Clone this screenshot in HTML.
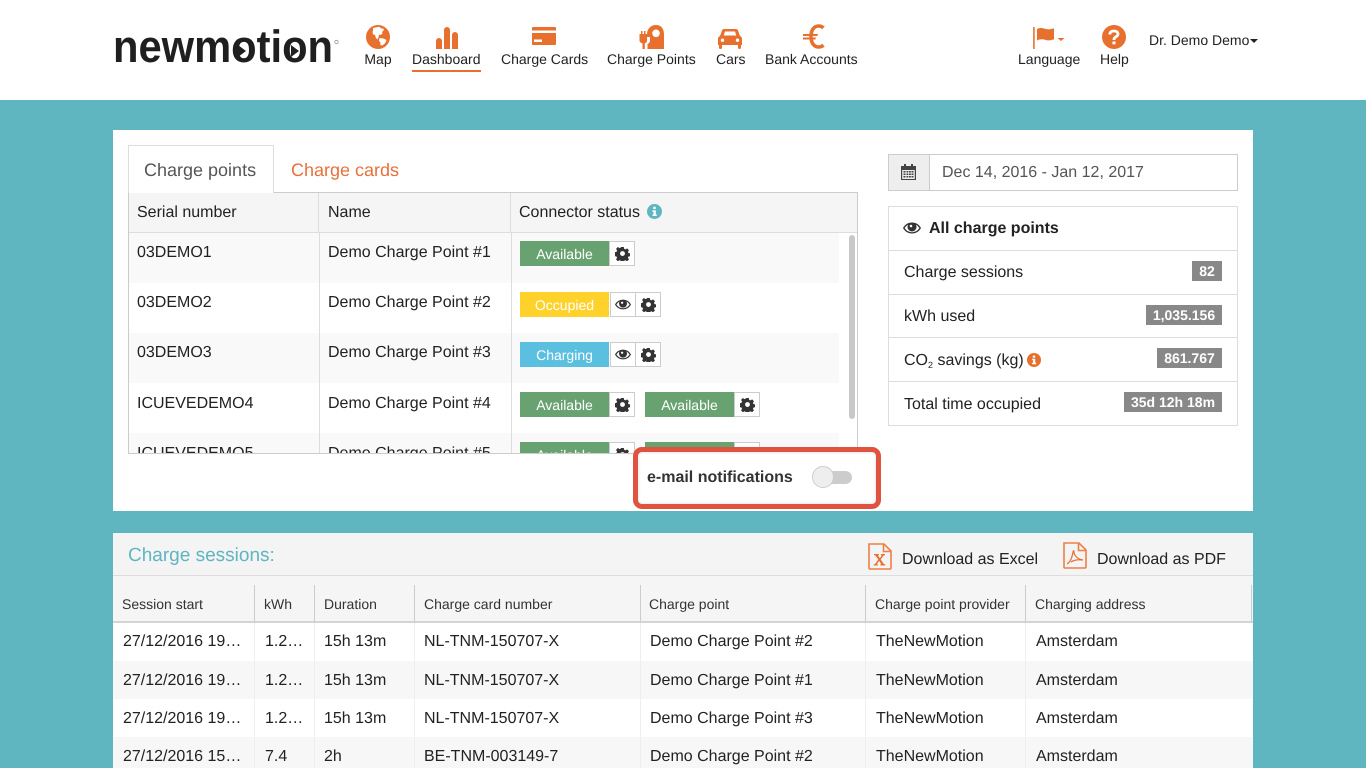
<!DOCTYPE html>
<html lang="en">
<head>
<meta charset="utf-8">
<title>NewMotion Dashboard</title>
<style>
html,body{margin:0;padding:0;width:1366px;height:768px;overflow:hidden;background:#5fb5c0;font-family:"Liberation Sans",Arial,sans-serif;color:#222;text-rendering:geometricPrecision}
*{box-sizing:border-box}
.a{position:absolute}
.t{position:absolute;white-space:nowrap;line-height:20px;height:20px}
.c{transform:translateX(-50%)}
.n{font-size:14px}
.m{font-size:16px;margin-top:1px}
.h{font-size:14px;color:#333}
.badge{position:absolute;height:25px;width:89px;color:#fff;font-size:14px;text-align:center;line-height:26px}
.g{background:#68a270}
.y{background:#ffd22b}
.b{background:#5bc0e0}
.btn{position:absolute;height:25px;width:26px;background:#fff;border:1px solid #ccc}
.btn svg{position:absolute;left:5px;top:4px}
.btn svg.e{left:4px;top:6px}
.gr{position:absolute;background:#888;color:#fff;font-size:14px;font-weight:bold;height:20px;line-height:20px;text-align:center}
</style>
</head>
<body>
<svg width="0" height="0" style="position:absolute">
<defs>
<symbol id="gear" viewBox="0 0 16 16">
<path fill="#333" fill-rule="evenodd" d="M6.600 1h2.800l.4 2 1.400.6 1.700-1.100 2 2-1.100 1.700.6 1.400 2 .4v2.800l-2 .4-.6 1.400 1.100 1.700-2 2-1.700-1.100-1.400.6-.4 2H6.600l-.4-2-1.400-.6-1.700 1.100-2-2 1.100-1.700-.6-1.400-2-.4V6.600l2-.4.6-1.400-1.100-1.700 2-2 1.700 1.100 1.400-.6zM8 5.400a2.600 2.600 0 1 0 0 5.200 2.600 2.600 0 0 0 0-5.200z"/>
</symbol>
<symbol id="eye" viewBox="0 0 18 12">
<path fill="#333" fill-rule="evenodd" d="M0 6C2 2.400 5.200.5 9 .5S16 2.400 18 6c-2 3.600-5.200 5.500-9 5.500S2 9.600 0 6zm1.600 0C3.300 8.600 5.800 10.200 9 10.200S14.700 8.600 16.400 6C15.400 4.500 14.200 3.300 12.700 2.600c.5.700.8 1.500.8 2.400a4.500 4.500 0 0 1-9 0c0-.9.300-1.700.8-2.400C3.800 3.300 2.600 4.500 1.600 6z"/>
<circle cx="8" cy="4" r="1.300" fill="#fff"/>
</symbol>
</defs>
</svg>

<!-- Header -->
<div class="a" style="left:0;top:0;width:1366px;height:100px;background:#fff"></div>

<svg class="a" style="left:110px;top:20px" width="235" height="50" viewBox="0 0 235 50">
<text transform="translate(3 42) scale(1 1.090)" x="0" y="0" font-family="Liberation Sans" font-weight="bold" font-size="41.700" fill="#1f1f1f" textLength="220" lengthAdjust="spacingAndGlyphs">newmotion</text>
<path d="M128 25l8 6-8 6z" fill="#1f1f1f"/>
<path d="M181 25l8 6-8 6z" fill="#1f1f1f"/>
<circle cx="226.500" cy="22" r="1.700" fill="none" stroke="#999" stroke-width=".8"/>
</svg>

<!-- Map icon -->
<svg class="a" style="left:366px;top:25px" width="24" height="24" viewBox="0 0 24 24">
<circle cx="12" cy="12" r="12" fill="#e8702e"/>
<path fill="#fff" d="M7 3l6-1.300 2.500 1.800 2.500.4-.8 2.100-1.200 1 .5 1.500-1.500 1.200-2 0-.5 2.500-1 2.300-1.800-1.800-.5-2.500-2.200-1-.5-2.400L7 6z"/>
<path fill="#fff" d="M13.500 13l4 .5 3 1.500-1.200 3-3 2.500-2-.5.200-2.300-1.500-2z"/>
</svg>
<div class="t n c" style="left:378px;top:49px">Map</div>

<!-- Dashboard icon -->
<svg class="a" style="left:436px;top:27px" width="22" height="22" viewBox="0 0 22 22">
<path fill="#e8702e" d="M0 14a3 3 0 0 1 6 0v8H0zM8 3a3 3 0 0 1 6 0v19H8zM16 8a3 3 0 0 1 6 0v14h-6z"/>
</svg>
<div class="t n" style="left:412px;top:49px">Dashboard</div>
<div class="a" style="left:412px;top:70px;width:69px;height:2px;background:#e8702e"></div>

<!-- Charge cards -->
<svg class="a" style="left:532px;top:27px" width="24" height="18" viewBox="0 0 24 18">
<path fill="#e8702e" d="M1 0h22a1 1 0 0 1 1 1v2.500H0V1a1 1 0 0 1 1-1zM0 6h24v11a1 1 0 0 1-1 1H1a1 1 0 0 1-1-1zM2 12.500v2.500h8v-2.500z"/>
</svg>
<div class="t n" style="left:501px;top:49px">Charge Cards</div>

<!-- Charge points -->
<svg class="a" style="left:639px;top:25px" width="25" height="24" viewBox="0 0 25 24">
<path fill="#e8702e" fill-rule="evenodd" d="M8 9.500C8 4 11.500 0 17 0s8 4 8 9.500V24H8.500v-5c1.500-.5 2.500-2 2.500-3.500v-3.500H8zM17 4.500a3.800 3.800 0 1 0 0 7.600 3.800 3.800 0 0 0 0-7.600z"/>
<path fill="#e8702e" d="M2 6h1.500v3H5V6h1.500v3H8v6.500c0 1.500-1 2.500-2.200 2.800V24H3.500v-5.700C2 18 .5 17 .5 15.500V9H2z"/>
</svg>
<div class="t n" style="left:607px;top:49px">Charge Points</div>

<!-- Cars -->
<svg class="a" style="left:718px;top:29px" width="24" height="20" viewBox="0 0 24 20">
<path fill="#e8702e" fill-rule="evenodd" d="M6 0h12c1 0 1.600.5 2 1.500L22 7c1.300.6 2 1.500 2 3v6h-1v2.500a1.500 1.500 0 0 1-3 0V16H4v2.500a1.500 1.500 0 0 1-3 0V16H0v-6c0-1.500.7-2.400 2-3L4 1.500C4.400.5 5 0 6 0zM7 2.500L5.700 6.500h12.600L17 2.500zM4.500 9.500a1.700 1.700 0 1 0 0 3.400 1.700 1.700 0 0 0 0-3.400zM19.500 9.500a1.700 1.700 0 1 0 0 3.400 1.700 1.700 0 0 0 0-3.400z"/>
</svg>
<div class="t n" style="left:716px;top:49px">Cars</div>

<!-- Euro -->
<svg class="a" style="left:802px;top:24px" width="24" height="25" viewBox="0 0 24 25">
<path fill="none" stroke="#e8702e" stroke-width="3.600" d="M21.500 3.800C20 2.600 18.500 2 16.800 2c-4.800 0-7.800 4-7.800 10.500S12 23 16.800 23c1.700 0 3.200-.6 4.700-1.800"/>
<path fill="#e8702e" d="M1 10h15l-.6 2H1zM1 13.500h13l-.6 2H1z"/>
</svg>
<div class="t n" style="left:765px;top:49px">Bank Accounts</div>

<!-- Language -->
<svg class="a" style="left:1033px;top:26px" width="33" height="24" viewBox="0 0 33 24">
<path fill="#ee7f45" d="M0 1h1.800v22H0z"/>
<path fill="#e8702e" d="M4 3c3-1.500 5.500-1 8-.2s5 .8 9-.5v11c-4 1.500-6.500 1.300-9 .5S7 13 4 14.500z"/>
<path fill="#e8702e" d="M24.500 12h7l-3.500 3z"/>
</svg>
<div class="t n" style="left:1018px;top:49px">Language</div>

<!-- Help -->
<svg class="a" style="left:1102px;top:25px" width="24" height="24" viewBox="0 0 24 24">
<circle cx="12" cy="12" r="12" fill="#e8702e"/>
<path fill="none" stroke="#fff" stroke-width="2.800" d="M7.800 9.500c0-2.300 1.800-3.500 4.200-3.500s4 1.200 4 3.100c0 2.700-4 2.700-4 5.100v.8"/>
<rect x="10.500" y="16.500" width="3" height="2.800" fill="#fff"/>
</svg>
<div class="t n" style="left:1100px;top:49px">Help</div>

<div class="t n" style="left:1149px;top:30px">Dr. Demo Demo</div>
<div class="a" style="left:1250px;top:39px;width:0;height:0;border-left:4px solid transparent;border-right:4px solid transparent;border-top:4px solid #222"></div>

<!-- Panel 1 -->
<div class="a" style="left:113px;top:130px;width:1140px;height:381px;background:#fff"></div>

<!-- Tabs -->
<div class="a" style="left:128px;top:145px;width:146px;height:48px;background:#fff;border:1px solid #ddd;border-bottom:none;z-index:2"></div>
<div class="t" style="left:144px;top:160px;font-size:18px;color:#555;z-index:3">Charge points</div>
<div class="t" style="left:291px;top:160px;font-size:18px;color:#e8703a">Charge cards</div>

<!-- CP table -->
<div class="a" style="left:128px;top:192px;width:730px;height:262px;border:1px solid #ccc;background:#fff"></div>
<div class="a" style="left:129px;top:193px;width:728px;height:40px;background:#f5f5f5;border-bottom:1px solid #ddd"></div>
<div class="a" style="left:318px;top:193px;width:1px;height:40px;background:#ddd"></div>
<div class="a" style="left:510px;top:193px;width:1px;height:40px;background:#ddd"></div>
<div class="t m" style="left:137px;top:202px">Serial number</div>
<div class="t m" style="left:328px;top:202px">Name</div>
<div class="t m" style="left:519px;top:202px">Connector status</div>
<svg class="a" style="left:647px;top:204px" width="15" height="15" viewBox="0 0 15 15"><circle cx="7.500" cy="7.500" r="7.500" fill="#5fb5c0"/><path fill="#fff" d="M6.200 2.800h2.600v2.200H6.200zM5.500 6.200h3.300v4.300h1v1.500H5.500v-1.500h1V7.700h-1z"/></svg>

<div class="a" style="left:129px;top:233px;width:728px;height:220px;overflow:hidden">
  <div class="a" style="left:0;top:0;width:710px;height:50px;background:#f9f9f9"></div>
  <div class="a" style="left:0;top:100px;width:710px;height:50px;background:#f9f9f9"></div>
  <div class="a" style="left:0;top:200px;width:710px;height:50px;background:#f9f9f9"></div>
  <div class="a" style="left:190px;top:0;width:1px;height:220px;background:#ddd"></div>
  <div class="a" style="left:382px;top:0;width:1px;height:220px;background:#ddd"></div>

  <div class="t m" style="left:8px;top:9px">03DEMO1</div>
  <div class="t m" style="left:199px;top:9px">Demo Charge Point #1</div>
  <div class="badge g" style="left:391px;top:8px">Available</div>
  <div class="btn" style="left:480px;top:8px"><svg width="15" height="15"><use href="#gear"/></svg></div>

  <div class="t m" style="left:8px;top:59px">03DEMO2</div>
  <div class="t m" style="left:199px;top:59px">Demo Charge Point #2</div>
  <div class="badge y" style="left:391px;top:59px">Occupied</div>
  <div class="btn" style="left:481px;top:59px"><svg class="e" width="16" height="11"><use href="#eye"/></svg></div>
  <div class="btn" style="left:506px;top:59px"><svg width="15" height="15"><use href="#gear"/></svg></div>

  <div class="t m" style="left:8px;top:109px">03DEMO3</div>
  <div class="t m" style="left:199px;top:109px">Demo Charge Point #3</div>
  <div class="badge b" style="left:391px;top:109px">Charging</div>
  <div class="btn" style="left:481px;top:109px"><svg class="e" width="16" height="11"><use href="#eye"/></svg></div>
  <div class="btn" style="left:506px;top:109px"><svg width="15" height="15"><use href="#gear"/></svg></div>

  <div class="t m" style="left:8px;top:160px">ICUEVEDEMO4</div>
  <div class="t m" style="left:199px;top:160px">Demo Charge Point #4</div>
  <div class="badge g" style="left:391px;top:159px">Available</div>
  <div class="btn" style="left:480px;top:159px"><svg width="15" height="15"><use href="#gear"/></svg></div>
  <div class="badge g" style="left:516px;top:159px">Available</div>
  <div class="btn" style="left:605px;top:159px"><svg width="15" height="15"><use href="#gear"/></svg></div>

  <div class="t m" style="left:8px;top:210px">ICUEVEDEMO5</div>
  <div class="t m" style="left:199px;top:210px">Demo Charge Point #5</div>
  <div class="badge g" style="left:391px;top:209px">Available</div>
  <div class="btn" style="left:480px;top:209px"><svg width="15" height="15"><use href="#gear"/></svg></div>
  <div class="badge g" style="left:516px;top:209px">Available</div>
  <div class="btn" style="left:605px;top:209px"><svg width="15" height="15"><use href="#gear"/></svg></div>

  <div class="a" style="left:720px;top:2px;width:6px;height:184px;border-radius:3px;background:#c8c8c8"></div>
</div>

<!-- Notification highlight -->
<div class="a" style="left:633px;top:447px;width:248px;height:62px;background:#fff;border:5px solid #e0533f;border-radius:9px;box-shadow:inset 0 0 3px rgba(0,0,0,.15)"></div>
<div class="t" style="left:647px;top:468px;font-size:16px;font-weight:bold;color:#333">e-mail notifications</div>
<div class="a" style="left:816px;top:471px;width:36px;height:13px;border-radius:7px;background:#ccc"></div>
<div class="a" style="left:812px;top:466px;width:22px;height:22px;border-radius:50%;background:#eee;border:1px solid #ccc"></div>

<!-- Date -->
<div class="a" style="left:888px;top:154px;width:350px;height:37px;border:1px solid #ccc;background:#fff"></div>
<div class="a" style="left:889px;top:155px;width:41px;height:35px;background:#eee;border-right:1px solid #ccc"></div>
<svg class="a" style="left:901px;top:164px" width="15" height="16" viewBox="0 0 15 16">
<path fill="#444" fill-rule="evenodd" d="M3 0h2v2h5V0h2v2h3v14H0V2h3zM1.200 6v9h12.600V6zM2.500 7h2v1.500h-2zM5.500 7h1.800v1.500H5.500zM8 7h1.800v1.500H8zM10.500 7h2v1.500h-2zM2.500 9.500h2V11h-2zM5.500 9.500h1.800V11H5.500zM8 9.500h1.800V11H8zM10.500 9.500h2V11h-2zM2.500 12h2v1.500h-2zM5.500 12h1.800v1.500H5.500zM8 12h1.800v1.500H8zM10.500 12h2v1.500h-2z"/>
</svg>
<div class="t m" style="left:942px;top:162px;color:#555">Dec 14, 2016 - Jan 12, 2017</div>

<!-- Stats list -->
<div class="a" style="left:888px;top:206px;width:350px;height:220px;border:1px solid #ddd;background:#fff"></div>
<div class="a" style="left:889px;top:250px;width:348px;height:1px;background:#ddd"></div>
<div class="a" style="left:889px;top:294px;width:348px;height:1px;background:#ddd"></div>
<div class="a" style="left:889px;top:337px;width:348px;height:1px;background:#ddd"></div>
<div class="a" style="left:889px;top:381px;width:348px;height:1px;background:#ddd"></div>
<svg class="a" style="left:903px;top:222px" width="18" height="12"><use href="#eye"/></svg>
<div class="t m" style="left:929px;top:218px;font-weight:bold">All charge points</div>
<div class="t m" style="left:904px;top:262px">Charge sessions</div>
<div class="gr" style="left:1192px;top:261px;width:30px">82</div>
<div class="t m" style="left:904px;top:306px">kWh used</div>
<div class="gr" style="left:1146px;top:305px;width:76px">1,035.156</div>
<div class="t m" style="left:904px;top:350px">CO<span style="font-size:9px;position:relative;top:3px">2</span> savings (kg)</div>
<svg class="a" style="left:1027px;top:353px" width="14" height="14" viewBox="0 0 15 15"><circle cx="7.500" cy="7.500" r="7.500" fill="#e8702e"/><path fill="#fff" d="M6.200 2.800h2.600v2.200H6.200zM5.500 6.200h3.300v4.300h1v1.500H5.500v-1.500h1V7.700h-1z"/></svg>
<div class="gr" style="left:1157px;top:348px;width:65px">861.767</div>
<div class="t m" style="left:904px;top:394px">Total time occupied</div>
<div class="gr" style="left:1124px;top:392px;width:98px">35d 12h 18m</div>

<!-- Panel 2 -->
<div class="a" style="left:113px;top:533px;width:1140px;height:235px;background:#fff"></div>
<div class="a" style="left:113px;top:533px;width:1140px;height:43px;background:#f4f4f4;border-bottom:1px solid #ddd"></div>
<div class="t" style="left:128px;top:546px;font-size:19px;color:#5fb5c0">Charge sessions:</div>

<svg class="a" style="left:868px;top:543px" width="24" height="27" viewBox="0 0 24 27">
<path fill="none" stroke="#ee7f45" stroke-width="1.600" d="M1 1h15l7 7v17a1 1 0 0 1-1 1H2a1 1 0 0 1-1-1zM15.500 1v7.500H23"/>
<path fill="#e8702e" d="M6 11.500h4.800v1.200H9.900l2 3 2-3h-1v-1.200h4.100v1.200h-1.200l-3.100 4.300 3.400 4.800h1.100V23h-4.800v-1.200h1l-2.300-3.400-2.300 3.400h1V23H5.700v-1.200h1.200l3.400-4.800-3.100-4.300H6z" transform="translate(0 -.5)"/>
</svg>
<div class="t m" style="left:902px;top:549px">Download as Excel</div>
<svg class="a" style="left:1063px;top:542px" width="24" height="27" viewBox="0 0 24 27">
<path fill="none" stroke="#ee7f45" stroke-width="1.600" d="M1 1h15l7 7v17a1 1 0 0 1-1 1H2a1 1 0 0 1-1-1zM15.500 1v7.500H23"/>
<path fill="none" stroke="#e8702e" stroke-width="1.200" d="M4 22c3-1.500 5-6 6-12 .5-2 1-1.500 1 0 0 3 3 7 9 8-4-.5-9 0-12 2"/>
</svg>
<div class="t m" style="left:1097px;top:549px">Download as PDF</div>

<!-- Sessions head -->
<div class="a" style="left:113px;top:576px;width:1140px;height:47px;background:#f5f5f5;border-bottom:2px solid #d4d4d4"></div>
<div class="a" style="left:254px;top:585px;width:1px;height:37px;background:#ccc"></div>
<div class="a" style="left:314px;top:585px;width:1px;height:37px;background:#ccc"></div>
<div class="a" style="left:414px;top:585px;width:1px;height:37px;background:#ccc"></div>
<div class="a" style="left:640px;top:585px;width:1px;height:37px;background:#ccc"></div>
<div class="a" style="left:865px;top:585px;width:1px;height:37px;background:#ccc"></div>
<div class="a" style="left:1025px;top:585px;width:1px;height:37px;background:#ccc"></div>
<div class="a" style="left:1251px;top:585px;width:1px;height:37px;background:#ccc"></div>
<div class="t h" style="left:122px;top:594px">Session start</div>
<div class="t h" style="left:264px;top:594px">kWh</div>
<div class="t h" style="left:324px;top:594px">Duration</div>
<div class="t h" style="left:424px;top:594px">Charge card number</div>
<div class="t h" style="left:649px;top:594px">Charge point</div>
<div class="t h" style="left:875px;top:594px">Charge point provider</div>
<div class="t h" style="left:1035px;top:594px">Charging address</div>

<!-- Sessions rows -->
<div class="a" style="left:113px;top:661px;width:1140px;height:38px;background:#f7f7f7"></div>
<div class="a" style="left:113px;top:737px;width:1140px;height:31px;background:#f7f7f7"></div>
<div class="a" style="left:254px;top:623px;width:1px;height:145px;background:#eee"></div>
<div class="a" style="left:314px;top:623px;width:1px;height:145px;background:#eee"></div>
<div class="a" style="left:414px;top:623px;width:1px;height:145px;background:#eee"></div>
<div class="a" style="left:640px;top:623px;width:1px;height:145px;background:#eee"></div>
<div class="a" style="left:865px;top:623px;width:1px;height:145px;background:#eee"></div>
<div class="a" style="left:1025px;top:623px;width:1px;height:145px;background:#eee"></div>

<div class="t m" style="left:123px;top:631px">27/12/2016 19…</div>
<div class="t m" style="left:265px;top:631px">1.2…</div>
<div class="t m" style="left:324px;top:631px">15h 13m</div>
<div class="t m" style="left:424px;top:631px">NL-TNM-150707-X</div>
<div class="t m" style="left:650px;top:631px">Demo Charge Point #2</div>
<div class="t m" style="left:876px;top:631px">TheNewMotion</div>
<div class="t m" style="left:1036px;top:631px">Amsterdam</div>

<div class="t m" style="left:123px;top:670px">27/12/2016 19…</div>
<div class="t m" style="left:265px;top:670px">1.2…</div>
<div class="t m" style="left:324px;top:670px">15h 13m</div>
<div class="t m" style="left:424px;top:670px">NL-TNM-150707-X</div>
<div class="t m" style="left:650px;top:670px">Demo Charge Point #1</div>
<div class="t m" style="left:876px;top:670px">TheNewMotion</div>
<div class="t m" style="left:1036px;top:670px">Amsterdam</div>

<div class="t m" style="left:123px;top:708px">27/12/2016 19…</div>
<div class="t m" style="left:265px;top:708px">1.2…</div>
<div class="t m" style="left:324px;top:708px">15h 13m</div>
<div class="t m" style="left:424px;top:708px">NL-TNM-150707-X</div>
<div class="t m" style="left:650px;top:708px">Demo Charge Point #3</div>
<div class="t m" style="left:876px;top:708px">TheNewMotion</div>
<div class="t m" style="left:1036px;top:708px">Amsterdam</div>

<div class="t m" style="left:123px;top:746px">27/12/2016 15…</div>
<div class="t m" style="left:265px;top:746px">7.4</div>
<div class="t m" style="left:324px;top:746px">2h</div>
<div class="t m" style="left:424px;top:746px">BE-TNM-003149-7</div>
<div class="t m" style="left:650px;top:746px">Demo Charge Point #2</div>
<div class="t m" style="left:876px;top:746px">TheNewMotion</div>
<div class="t m" style="left:1036px;top:746px">Amsterdam</div>
</body>
</html>
